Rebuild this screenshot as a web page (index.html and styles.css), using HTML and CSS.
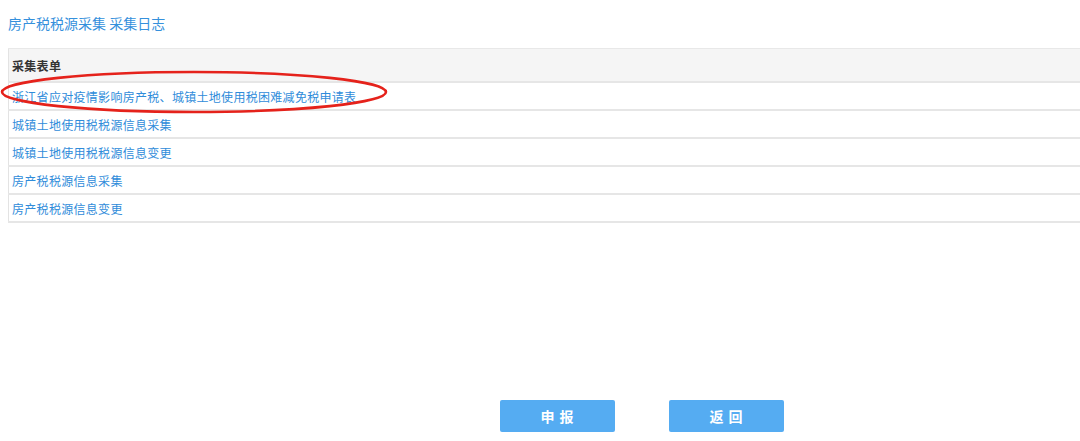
FILE: index.html
```html
<!DOCTYPE html>
<html lang="zh-CN">

<head>
    <meta charset="UTF-8">
    <meta name="viewport" content="width=device-width, initial-scale=1.0">
    <title>房产税税源采集</title>
    <link rel="stylesheet" href="styles.css">
</head>

<body>
    <div class="page">
        <div class="crumb">房产税税源采集 采集日志</div>

        <div class="form-list">
            <table class="list-table">
                <tr>
                    <th>采集表单</th>
                </tr>
                <tr>
                    <td><a href="#">浙江省应对疫情影响房产税、城镇土地使用税困难减免税申请表</a></td>
                </tr>
                <tr>
                    <td><a href="#">城镇土地使用税税源信息采集</a></td>
                </tr>
                <tr>
                    <td><a href="#">城镇土地使用税税源信息变更</a></td>
                </tr>
                <tr>
                    <td><a href="#">房产税税源信息采集</a></td>
                </tr>
                <tr>
                    <td><a href="#">房产税税源信息变更</a></td>
                </tr>
            </table>
            <!-- red mark drawn over the first row -->
            <svg class="mark" width="400" height="50" viewBox="0 0 400 50">
                <ellipse cx="194" cy="22" rx="192" ry="20" fill="none" stroke="#e5221b" stroke-width="2.6" />
            </svg>
        </div>

        <div class="buttons">
            <button>申报</button>
            <button>返回</button>
        </div>
    </div>
</body>

</html>
```

FILE: styles.css
```css
body {
    margin: 0;
    font-family: "Noto Sans CJK SC", "Liberation Sans", sans-serif;
    background-color: #fff;
    overflow: hidden;
}

.page {
    width: 1267px;
    padding: 0 8px;
}

.crumb {
    height: 48px;
    line-height: 47px;
    font-size: 14px;
    color: #3590dc;
}

.form-list {
    position: relative;
}

.list-table {
    width: 100%;
    border-collapse: collapse;
    border-left: 1px solid #e3e3e3;
    border-top: 1px solid #e8e8e8;
}

.list-table th,
.list-table td {
    text-align: left;
    padding: 0 3px;
    font-size: 12px;
    letter-spacing: 0.3px;
    border-bottom: 2px solid #e6e6e6;
}

.list-table th {
    height: 32px;
    background-color: #f5f5f5;
    color: #333;
    font-weight: bold;
}

.list-table td {
    height: 26px;
}

.list-table a {
    color: #2f8cda;
    text-decoration: none;
}

.mark {
    position: absolute;
    left: -8px;
    top: 22px;
}

.buttons {
    display: flex;
    justify-content: center;
    gap: 54px;
    margin-top: 177px;
}

.buttons button {
    width: 115px;
    height: 32px;
    border: none;
    border-radius: 2px;
    background-color: #55acf2;
    color: #fff;
    font-family: "Noto Sans CJK SC", sans-serif;
    font-size: 14px;
    font-weight: bold;
    letter-spacing: 5px;
    padding: 0 0 0 5px;
    cursor: pointer;
}
```
